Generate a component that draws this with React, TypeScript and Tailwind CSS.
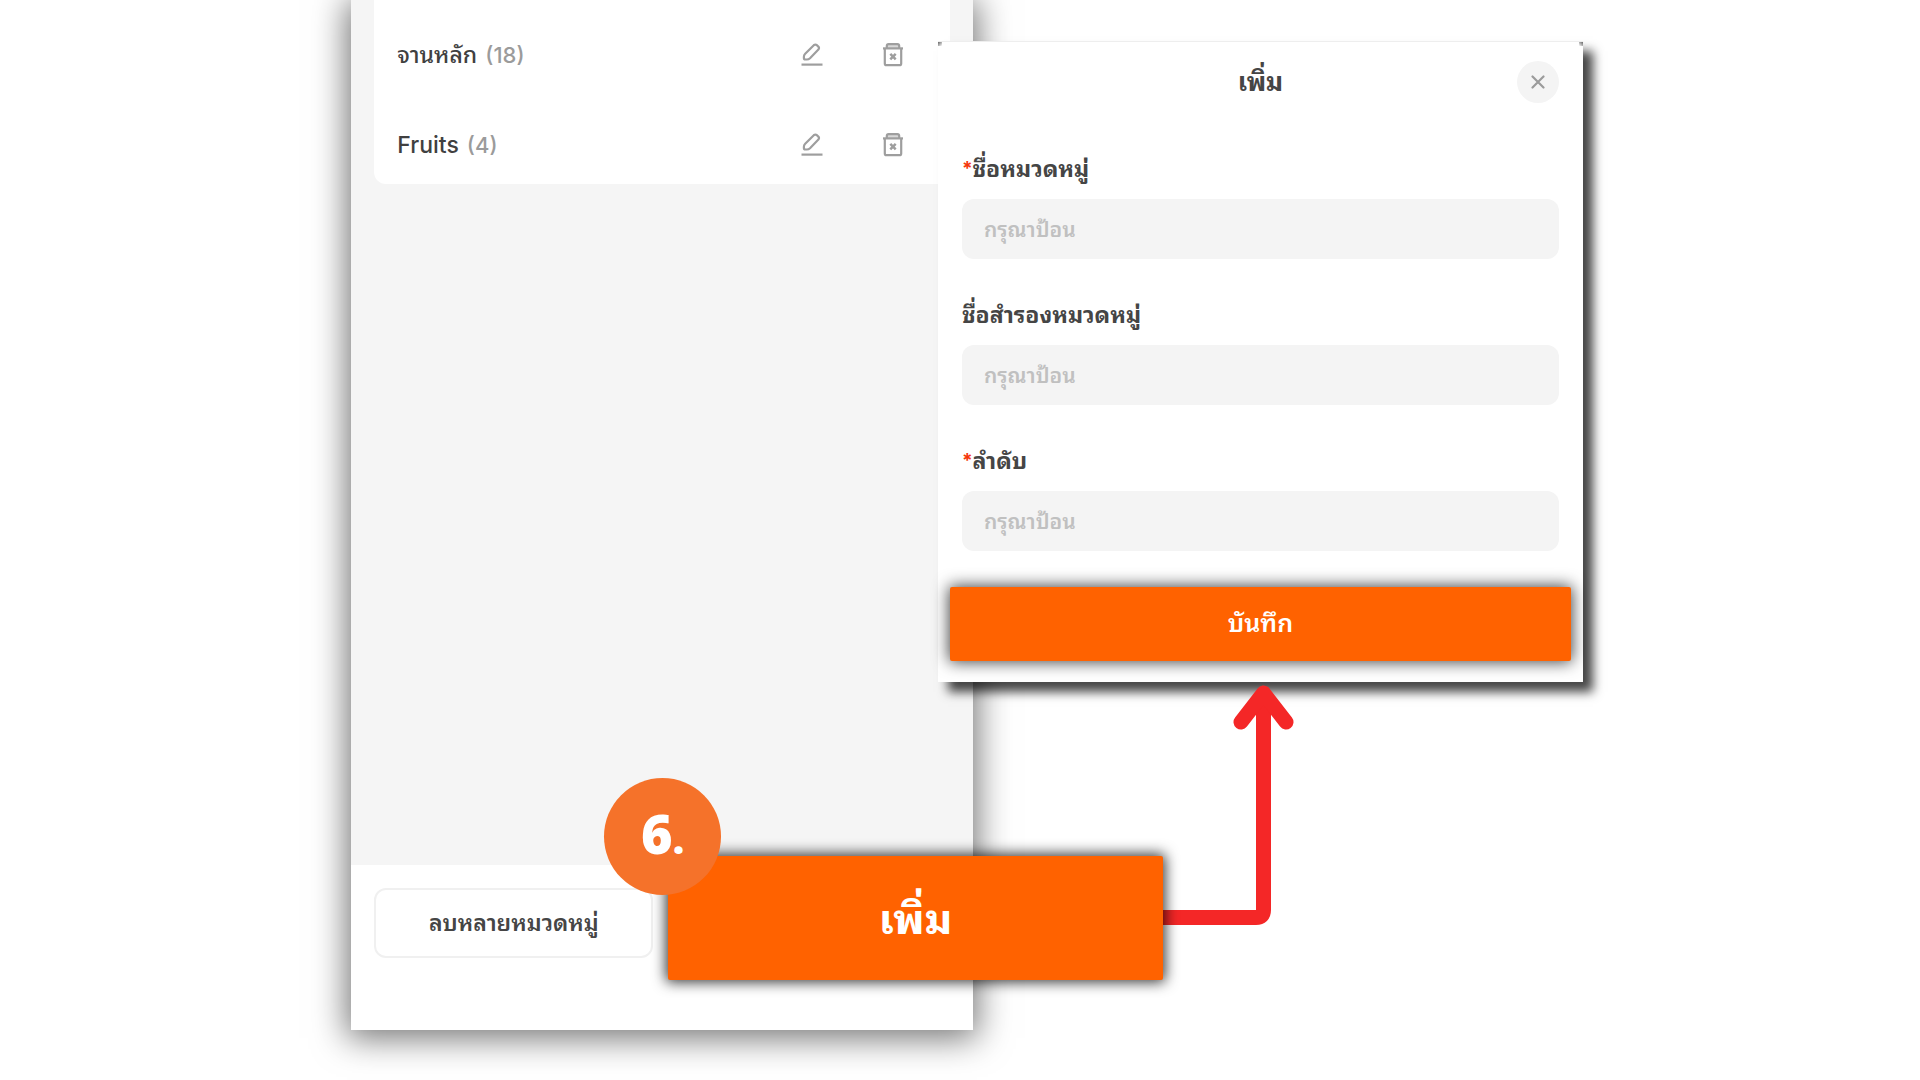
import { useId } from "react";

const EditIcon = () => (
  <svg viewBox="0 0 24 24" className="size-6" fill="none" stroke="#9e9e9e" strokeWidth="2.2" strokeLinejoin="round">
    <path d="M13.8 2.2 Q15.4 0.900 16.900 2.200 L18.300 3.600 Q19.600 5 18.400 6.500 L10 15.200 Q8.600 16.500 6.800 16.500 H5.400 Q3.900 16.500 3.900 15 V13.700 Q3.900 12 5.200 10.700 Z" />
    <path d="M1.500 21.600 H22.500" />
  </svg>
);

const TrashIcon = () => (
  <svg viewBox="0 0 24 24" className="size-6" fill="none" stroke="#9e9e9e" strokeWidth="2.2">
    <path d="M5.800 5 V3 Q5.800 1.200 7.600 1.200 H16.400 Q18.200 1.200 18.200 3 V5" fill="#d8d8d8" />
    <path d="M2 5.400 H22" />
    <path d="M3.800 5.400 V20.400 Q3.800 22.200 5.600 22.200 H18.400 Q20.200 22.200 20.200 20.400 V5.400" />
    <path d="M9.300 10.900 L14.700 16.300 M14.700 10.900 L9.300 16.300" strokeWidth="2.500" />
  </svg>
);

function CategoryRow({ name, count }: { name: string; count: number }) {
  return (
    <li className="flex h-[78px] items-center pr-[45px] pl-[23px]">
      <span className="text-[23px] leading-8 font-medium text-[#404040]">{name}</span>
      <span className="ml-2 flex-1 text-[22px] leading-8 font-medium text-[#9b9b9b]">({count})</span>
      <button type="button" aria-label={`แก้ไข ${name}`} className="mr-[57px]">
        <EditIcon />
      </button>
      <button type="button" aria-label={`ลบ ${name}`}>
        <TrashIcon />
      </button>
    </li>
  );
}

function Field({ label, required }: { label: string; required?: boolean }) {
  const id = useId();
  return (
    <div className="flex flex-col">
      <label htmlFor={id} className="flex h-[58px] items-center text-[23px] leading-8 font-bold text-[#454545]">
        {required && <span className="text-[19px] text-[#f5360a]">*</span>}
        {label}
      </label>
      <input
        id={id}
        placeholder="กรุณาป้อน"
        className="mt-px h-[60px] w-full rounded-xl bg-[#f4f4f4] px-[22px] text-[21px] font-semibold text-[#454545] outline-none placeholder:text-[#c0c0c0]"
      />
    </div>
  );
}

export default function App() {
  return (
    <main className='relative flex min-h-screen overflow-hidden bg-white font-["Inter","Noto_Sans_Thai_Looped","Loma","Noto_Sans_Thai","Noto_Sans",sans-serif]'>
      <section className="mb-[50px] ml-[18.3%] flex w-[32.4%] flex-col bg-[#f5f5f5] shadow-[0_4px_32px_4px_rgba(0,0,0,0.55)]">
        <ul className="mx-[23px] flex flex-col gap-3 rounded-b-xl bg-white pt-4">
          <CategoryRow name="จานหลัก" count={18} />
          <CategoryRow name="Fruits" count={4} />
        </ul>
        <div className="flex-1" />
        <footer className="flex h-[165px] items-start bg-white px-[23px] pt-[23px]">
          <button
            type="button"
            className="h-[70px] w-[279px] rounded-xl border-2 border-[#f0f0f0] bg-white text-[23px] font-semibold text-[#454545]"
          >
            ลบหลายหมวดหมู่
          </button>
        </footer>
      </section>

      <section
        role="dialog"
        aria-labelledby="dialog-title"
        className="absolute top-[41px] left-[48.85%] flex w-[33.6%] flex-col border-t border-[#eeeeee] bg-white shadow-[10px_10px_10px_rgba(0,0,0,0.73)]"
      >
        <span className="absolute top-0 left-0 size-1 bg-linear-to-br from-[#666666] to-white" />
        <span className="absolute top-0 right-0 size-1 bg-linear-to-bl from-[#666666] to-white" />
        <header className="relative flex h-20 items-center justify-center">
          <h2 id="dialog-title" className="text-[26px] leading-10 font-bold text-[#454545]">
            เพิ่ม
          </h2>
          <button
            type="button"
            aria-label="ปิด"
            className="absolute right-6 flex size-[42px] items-center justify-center rounded-full bg-[#f4f4f4]"
          >
            <svg viewBox="0 0 14 14" className="size-[14px]" stroke="#9b9b9b" strokeWidth="2.2" strokeLinecap="round">
              <path d="M1.5 1.5 L12.5 12.5 M12.5 1.5 L1.5 12.5" />
            </svg>
          </button>
        </header>
        <form className="flex flex-col px-3 pt-[18px] pb-[21px]">
          <div className="flex flex-col gap-[27px] px-3">
            <Field label="ชื่อหมวดหมู่" required />
            <Field label="ชื่อสำรองหมวดหมู่" />
            <Field label="ลำดับ" required />
          </div>
          <button
            type="button"
            className="mt-9 h-[74px] rounded-xs bg-[#ff6200] text-[25px] font-semibold text-white shadow-[0_0_16px_1px_rgba(0,0,0,0.75)]"
          >
            บันทึก
          </button>
        </form>
      </section>

      <svg
        viewBox="0 0 136 244"
        className="absolute top-[684px] left-[60.42%] h-[244px] w-[136px]"
        fill="none"
        stroke="#f42727"
        strokeWidth="15"
        aria-hidden="true"
      >
        <path d="M0 233.5 H96 Q103.5 233.5 103.5 226 V10" />
        <path d="M81 38 L103.5 9 L126 38" strokeLinecap="round" strokeLinejoin="round" />
      </svg>

      <div className="absolute bottom-[100px] left-[34.8%] w-[25.77%]">
        <button
          type="button"
          className="h-[124px] w-full rounded-xs bg-[#ff6200] text-[42px] font-bold text-white shadow-[0_0_14px_2px_rgba(0,0,0,0.8)]"
        >
          เพิ่ม
        </button>
        <div className='absolute -top-[78px] -left-16 flex size-[117px] items-center justify-center rounded-full bg-[#f5722a] pb-2 font-["Open_Sans",sans-serif] text-[54px] leading-none font-extrabold text-white'>
          <span>
            6<span className="text-[40px]">.</span>
          </span>
        </div>
      </div>
    </main>
  );
}
